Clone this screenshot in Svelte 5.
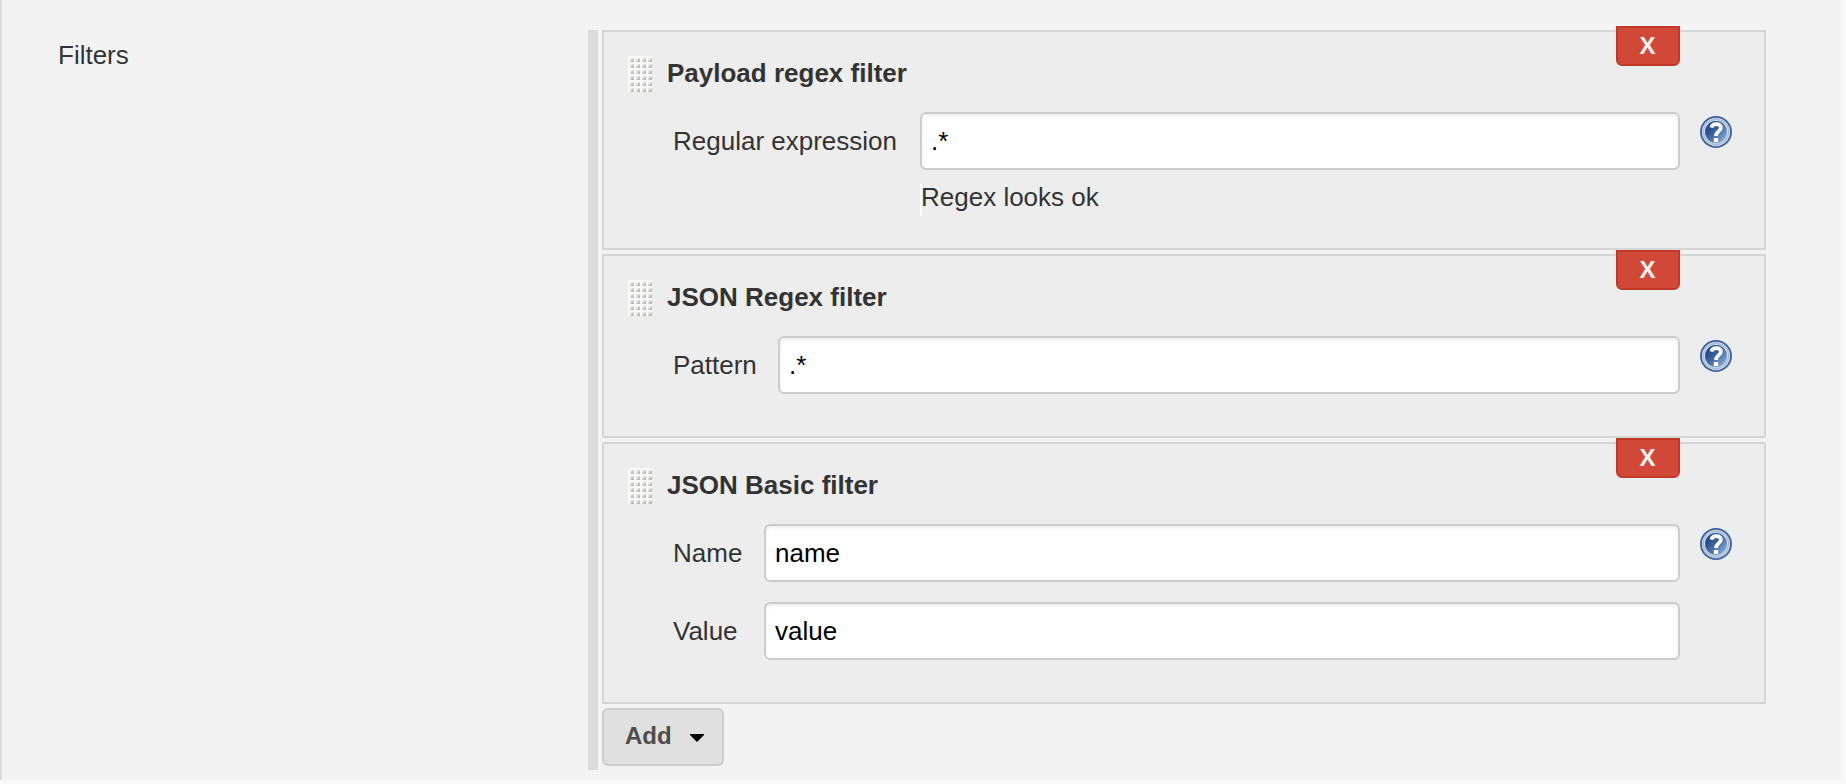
<script>
  const filters = [
    {
      title: 'Payload regex filter',
      labelWidth: 248,
      fields: [{ label: 'Regular expression', value: '.*', message: 'Regex looks ok' }]
    },
    {
      title: 'JSON Regex filter',
      labelWidth: 106,
      fields: [{ label: 'Pattern', value: '.*' }]
    },
    {
      title: 'JSON Basic filter',
      labelWidth: 92,
      fields: [
        { label: 'Name', value: 'name' },
        { label: 'Value', value: 'value' }
      ]
    }
  ];
</script>

<main class="page">
  <section class="row">
    <div class="row-label">Filters</div>
    <div class="list">
      {#each filters as filter}
        <article class="card">
          <button class="delete" type="button">X</button>
          <header class="card-head">
            <svg class="handle" width="24" height="36" viewBox="0 0 24 36" aria-hidden="true">
              <defs>
                <linearGradient id="dot" x1="0" y1="0" x2="1" y2="1">
                  <stop offset="0.15" stop-color="#efefed" />
                  <stop offset="0.9" stop-color="#b0b0ac" />
                </linearGradient>
                <pattern id="grip" width="6" height="6" patternUnits="userSpaceOnUse">
                  <rect width="6" height="6" fill="#f9f9f7" />
                  <rect x="2" y="2" width="4" height="4" rx="0.6" fill="url(#dot)" />
                </pattern>
              </defs>
              <rect width="24" height="36" fill="url(#grip)" />
            </svg>
            <b>{filter.title}</b>
          </header>
          <div class="fields">
            {#each filter.fields as field, i}
              <div class="field">
                <label style="width: {filter.labelWidth}px" for="{filter.title}-{i}">{field.label}</label>
                <div class="control">
                  <input id="{filter.title}-{i}" type="text" value={field.value} />
                  {#if field.message}
                    <div class="message">{field.message}</div>
                  {/if}
                </div>
                <div class="help">
                  {#if i === 0}
                    <svg width="32" height="32" viewBox="0 0 32 32" aria-hidden="true">
                      <defs>
                        <linearGradient id="disc" x1="0.1" y1="0.15" x2="0.85" y2="0.9">
                          <stop offset="0.1" stop-color="#1f4787" />
                          <stop offset="0.5" stop-color="#44689f" />
                          <stop offset="1" stop-color="#8aacd8" />
                        </linearGradient>
                        <linearGradient id="rim" x1="0" y1="0" x2="0.3" y2="1">
                          <stop offset="0" stop-color="#345f9e" />
                          <stop offset="1" stop-color="#44699f" />
                        </linearGradient>
                      </defs>
                      <circle cx="16" cy="16" r="16" fill="url(#rim)" />
                      <circle cx="16" cy="16" r="13.3" fill="#7f9cc6" stroke="#bccce2" stroke-width="1.7" />
                      <circle cx="16" cy="16" r="11.5" fill="url(#disc)" stroke="#d3deed" stroke-width="1.1" />
                      <path d="M11.4 11.6c.5-2.600 2.300-3.500 4.800-3.500 2.900 0 4.700 1.400 4.700 3.700 0 3.500-4.900 3.300-4.900 8.200" fill="none" stroke="#fff" stroke-width="3.700" />
                      <rect x="13.900" y="22" width="4.200" height="4" rx="0.600" fill="#fff" />
                    </svg>
                  {/if}
                </div>
              </div>
            {/each}
          </div>
        </article>
      {/each}
      <button class="add" type="button">
        <span>Add</span>
        <svg width="14" height="8" viewBox="0 0 14 8" aria-hidden="true"><path d="M0 0h14v1L7 8 0 1z" fill="#000" /></svg>
      </button>
    </div>
  </section>
</main>

<style>
  :global(body) {
    background: #f9f9f9;
  }
  .page {
    box-sizing: border-box;
    width: 1842px;
    height: 780px;
    padding-top: 30px;
    border-left: 2px solid #dbdbdb;
    background: #f3f3f3;
    color: #333;
    font: 26px/32px "Liberation Sans", Arial, sans-serif;
  }
  .row {
    display: flex;
  }
  .row-label {
    box-sizing: border-box;
    width: 586px;
    padding: 9px 0 0 56px;
  }
  .list {
    box-sizing: border-box;
    width: 1178px;
    height: 740px;
    padding-left: 4px;
    border-left: 10px solid #dbdbdb;
  }
  .card {
    box-sizing: border-box;
    position: relative;
    margin-bottom: 4px;
    padding: 24px 32px 42px 24px;
    border: 2px solid #d5d5d5;
    background: #ededed;
  }
  .card:has(.message) {
    padding-bottom: 32px;
  }
  .card-head {
    display: flex;
    height: 36px;
    gap: 15px;
    line-height: 34px;
  }
  .fields {
    display: flex;
    flex-direction: column;
    gap: 20px;
    margin-top: 20px;
    padding-left: 44px;
  }
  .field {
    display: flex;
  }
  label {
    flex: none;
    line-height: 58px;
    padding-left: 1px;
    box-sizing: border-box;
  }
  .control {
    flex: 1;
  }
  input {
    display: block;
    box-sizing: border-box;
    width: 100%;
    height: 58px;
    padding: 0 9px;
    border: 2px solid #ccc;
    border-radius: 6px;
    background: #fff;
    box-shadow: inset 0 2px 4px rgba(0, 0, 0, 0.075);
    color: #000;
    font: inherit;
  }
  .message {
    height: 32px;
    margin-top: 14px;
    border-left: 2px solid #fff;
    line-height: 27px;
    text-indent: -1px;
  }
  .help {
    flex: none;
    width: 52px;
    padding: 4px 0 0 20px;
    box-sizing: border-box;
    height: 36px;
  }
  .help svg {
    display: block;
  }
  .delete {
    position: absolute;
    top: -6px;
    right: 84px;
    box-sizing: border-box;
    width: 64px;
    height: 40px;
    padding: 0 1px 0 0;
    border: 2px solid #c0392b;
    border-radius: 0 0 6px 6px;
    background: #d24939;
    color: #f2f2f2;
    font: bold 24px/36px "Liberation Sans", Arial, sans-serif;
  }
  .add {
    display: flex;
    align-items: center;
    box-sizing: border-box;
    width: 122px;
    height: 58px;
    gap: 18px;
    padding: 0 0 2px 21px;
    border: 2px solid #ccc;
    border-radius: 6px;
    background: #e0e0e0;
    color: #4d4d4d;
    font: bold 24px/52px "Liberation Sans", Arial, sans-serif;
  }
  .add svg {
    margin-top: 3px;
  }
</style>
